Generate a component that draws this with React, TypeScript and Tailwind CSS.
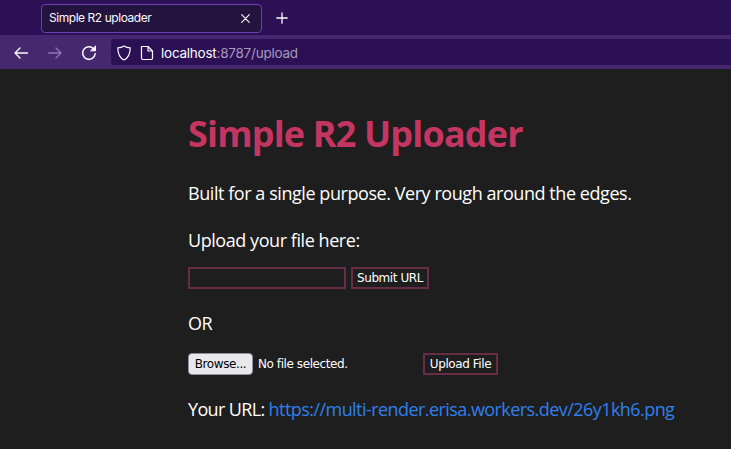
import React from "react";

const uiFont = "font-['Open_Sans','Noto_Sans',sans-serif]";
const controlFont = "text-[12px] leading-none font-['DejaVu_Sans',sans-serif] tracking-[-0.42px]";

function BarIcon({ children, className }: { children: React.ReactNode; className?: string }) {
  return (
    <svg className={className} width="16" height="16" viewBox="0 0 16 16" fill="none" stroke="currentColor" strokeWidth="1.4" strokeLinecap="round" strokeLinejoin="round">
      {children}
    </svg>
  );
}

function BrowserChrome() {
  return (
    <div className="bg-[#2c1055] text-[#fbfbfe]">
      <div className="h-[35px] flex items-center pl-[41px] pb-[1px] pt-[2px]">
        <div className="w-[221px] h-[29px] box-border rounded-[4px] border border-[#6b3fb0] bg-[#25133f] flex items-center pl-[7px] pr-[11px]">
          <span className="flex-1 text-[12px] font-['Inter',sans-serif] tracking-[-0.45px] whitespace-nowrap">Simple R2 uploader</span>
          <svg width="9" height="9" viewBox="0 0 9 9" stroke="currentColor" strokeWidth="1.1" strokeLinecap="round">
            <path d="M.7.7l7.600 7.600M8.300.7L.7 8.300" />
          </svg>
        </div>
        <svg className="ml-[14px]" width="12" height="12" viewBox="0 0 12 12" stroke="currentColor" strokeWidth="1.3" strokeLinecap="round">
          <path d="M6 .8v10.400M.8 6h10.400" />
        </svg>
      </div>
      <div className="h-[34px] box-border border-y-[4px] border-[#46286f] bg-[#46286f] flex items-center pl-[13px]">
        <BarIcon className="mt-[2px]"><path d="M14.500 8H2M7 3L2 8l5 5" /></BarIcon>
        <BarIcon className="mt-[2px] ml-[18px] text-[#8d76ad]"><path d="M1.500 8H14M9 3l5 5-5 5" /></BarIcon>
        <BarIcon className="mt-[2px] ml-[18px]">
          <path d="M14.200 8.700a6.300 6.300 0 1 1-1.700-5l1.300 1.400" strokeWidth="1.500" />
          <path d="M14.500 1.300v4.500H10z" fill="currentColor" strokeWidth="1" />
        </BarIcon>
        <div className="flex-1 ml-[14px] h-[26px] bg-[#2c1055] rounded-l-[4px] flex items-center pl-[5px] pt-[2px]">
          <BarIcon>
            <path d="M8 1c2 1.300 4 1.800 6.200 1.900 0 5.800-1.900 9.800-6.200 12.100C3.700 12.700 1.800 8.700 1.800 2.900 4 2.800 6 2.300 8 1z" strokeWidth="1.200" />
          </BarIcon>
          <BarIcon className="ml-[7px]">
            <path d="M2.500 1.500h6.500l4.500 4.500v7.300a1.200 1.200 0 0 1-1.200 1.200H3.700a1.200 1.200 0 0 1-1.200-1.200z" strokeWidth="1.200" />
            <path d="M9 1.500V6h4.500" strokeWidth="1.200" />
          </BarIcon>
          <span className="ml-[6px] text-[13.500px] font-['Inter',sans-serif] tracking-[-0.24px] whitespace-nowrap">
            localhost<span className="text-[#a798bd]">:8787/upload</span>
          </span>
        </div>
      </div>
    </div>
  );
}

function OutlineButton({ label, className }: { label: string; className?: string }) {
  return (
    <button className={`h-[22px] box-border border-2 border-[#662d44] bg-[#1e1e1e] px-[4px] text-white whitespace-nowrap ${controlFont} ${className ?? ""}`}>
      {label}
    </button>
  );
}

export default function App() {
  return (
    <div className="w-[731px] h-[449px] overflow-hidden bg-[#1e1e1e]">
      <BrowserChrome />
      <main className={`pl-[188px] pt-[41px] text-white text-[18px] leading-[24px] tracking-[-0.44px] ${uiFont}`}>
        <h1 className="text-[36px] leading-[48px] font-bold text-[#c53562] tracking-[-0.83px]">Simple R2 Uploader</h1>
        <p className="mt-[23px]">Built for a single purpose. Very rough around the edges.</p>
        <p className="mt-[23px]">Upload your file here:</p>
        <div className="mt-[15px] flex items-center gap-[5px]">
          <input className="w-[158px] h-[22px] box-border border-2 border-[#662d44] bg-[#1e1e1e]" />
          <OutlineButton label="Submit URL" />
        </div>
        <p className="mt-[22px]">OR</p>
        <div className="mt-[18px] flex items-center">
          <button className={`w-[65px] h-[22px] box-border rounded-[4px] border border-[#8f8f9d] bg-[#e9e9ed] text-black ${controlFont}`}>
            Browse...
          </button>
          <span className={`ml-[5px] w-[165px] whitespace-nowrap ${controlFont}`}>No file selected.</span>
          <OutlineButton label="Upload File" className="w-[75px]" />
        </div>
        <p className="mt-[22px] whitespace-nowrap">
          <span className="tracking-[-0.64px]">Your URL: </span>
          <a className="text-[#2f80ed] tracking-[-0.56px]">https://multi-render.erisa.workers.dev/26y1kh6.png</a>
        </p>
      </main>
    </div>
  );
}
